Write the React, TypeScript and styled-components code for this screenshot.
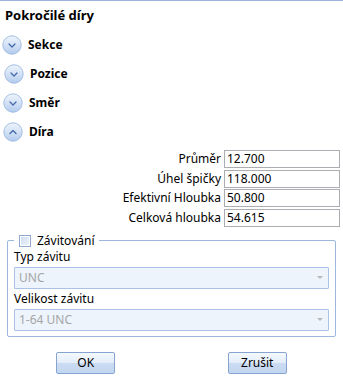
import React from "react";
import styled, { createGlobalStyle } from "styled-components";

const Global = createGlobalStyle`
  html, body { margin: 0; padding: 0; background: #ffffff; }
  body { font-family: "Segoe UI", "Noto Sans", "Open Sans", sans-serif; color: #000; }
  * { box-sizing: border-box; }
`;

const Page = styled.div`
  width: 343px;
  height: 385px;
  border-top: 1px solid #9bb3dc;
  display: flex;
  flex-direction: column;
  font-size: 12px;
  overflow: hidden;
`;

const Title = styled.div`
  font-weight: 700;
  font-size: 13px;
  line-height: 18px;
  padding: 5px 0 0 5px;
  height: 29px;
`;

const SectionRow = styled.div<{ $indent: number }>`
  display: flex;
  align-items: center;
  height: 29px;
  padding-left: ${(p) => p.$indent}px;
  gap: 6px;
  font-weight: 700;
  font-size: 12px;
`;

const Fields = styled.div`
  display: grid;
  grid-template-columns: 1fr 116px;
  column-gap: 3px;
  row-gap: 1.5px;
  padding: 3px 3px 0 0;
  margin-top: 1px;
`;

const FieldLabel = styled.div`
  text-align: right;
  line-height: 18px;
  white-space: nowrap;
`;

const FieldInput = styled.div`
  height: 18px;
  border: 1px solid #abadb3;
  padding: 0 2px;
  line-height: 16px;
  background: #fff;
`;

const Group = styled.fieldset`
  margin: 6px 7px 0 7px;
  padding: 0 6px 5px 6px;
  border: 1px solid #9cb7e0;
  border-radius: 2px;
  min-width: 0;
`;

const Legend = styled.legend`
  display: flex;
  align-items: center;
  gap: 6px;
  padding: 0 5px;
  margin-left: 0;
  line-height: 16px;
`;

const Check = styled.span`
  width: 12px;
  height: 12px;
  border: 1px solid #8ea9d4;
  background: #fff;
  padding: 1px;
  display: inline-block;
  &::after {
    content: "";
    display: block;
    width: 100%;
    height: 100%;
    background: linear-gradient(135deg, #cfdcf0 0%, #eef3fb 100%);
  }
`;

const SmallLabel = styled.div<{ $first?: boolean }>`
  line-height: 16px;
  margin-top: ${(p) => (p.$first ? 0 : 2)}px;
  margin-bottom: 2px;
`;

const Combo = styled.div`
  height: 22px;
  border: 1px solid #a9c2e6;
  border-radius: 1px;
  background: #edf4fc;
  color: #a6a6a6;
  display: flex;
  align-items: center;
  justify-content: space-between;
  padding: 0 5px 0 4px;
`;

const Arrow = styled.span`
  width: 0;
  height: 0;
  border-left: 3px solid transparent;
  border-right: 3px solid transparent;
  border-top: 3px solid #b8b8b8;
`;

const Footer = styled.div`
  display: grid;
  grid-template-columns: 1fr 1fr;
  justify-items: center;
  margin-top: 15px;
`;

const Button = styled.button`
  width: 59px;
  height: 22px;
  border: 1px solid #86a4d2;
  border-radius: 2px;
  background: linear-gradient(to bottom, #f5f9fe 0%, #e3edf9 48%, #cbdcf2 52%, #c1d6f0 100%);
  font-family: inherit;
  font-size: 12px;
  color: #000;
  padding: 0;
`;

const Expander: React.FC<{ up?: boolean }> = ({ up }) => (
  <svg width="20" height="20" viewBox="0 0 20 20">
    <defs>
      <linearGradient id={up ? "gu" : "gd"} x1="0" y1="0" x2="0" y2="1">
        <stop offset="0" stopColor="#eef4fc" />
        <stop offset="0.5" stopColor="#d3e2f6" />
        <stop offset="1" stopColor="#b1caed" />
      </linearGradient>
    </defs>
    <circle cx="10" cy="10" r="9.2" fill={`url(#${up ? "gu" : "gd"})`} stroke="#a3bde3" strokeWidth="1" />
    <path
      d={up ? "M7 11.5 L10 8.5 L13 11.5" : "M7 9 L10 12 L13 9"}
      fill="none"
      stroke="#4569a8"
      strokeWidth="1.3"
      strokeLinecap="round"
      strokeLinejoin="round"
    />
  </svg>
);

const sections = [
  { label: "Sekce", indent: 2, up: false },
  { label: "Pozice", indent: 4, up: false },
  { label: "Směr", indent: 3, up: false },
  { label: "Díra", indent: 3, up: true },
];

const fields = [
  ["Průměr", "12.700"],
  ["Úhel špičky", "118.000"],
  ["Efektivní Hloubka", "50.800"],
  ["Celková hloubka", "54.615"],
];

export default function App() {
  return (
    <>
      <Global />
      <Page>
        <Title>Pokročilé díry</Title>
        {sections.map((s) => (
          <SectionRow key={s.label} $indent={s.indent}>
            <Expander up={s.up} />
            <span>{s.label}</span>
          </SectionRow>
        ))}
        <Fields>
          {fields.map(([l, v]) => (
            <React.Fragment key={l}>
              <FieldLabel>{l}</FieldLabel>
              <FieldInput>{v}</FieldInput>
            </React.Fragment>
          ))}
        </Fields>
        <Group>
          <Legend>
            <Check />
            <span>Závitování</span>
          </Legend>
          <SmallLabel $first>Typ závitu</SmallLabel>
          <Combo>
            <span>UNC</span>
            <Arrow />
          </Combo>
          <SmallLabel>Velikost závitu</SmallLabel>
          <Combo>
            <span>1-64 UNC</span>
            <Arrow />
          </Combo>
        </Group>
        <Footer>
          <Button>OK</Button>
          <Button>Zrušit</Button>
        </Footer>
      </Page>
    </>
  );
}
